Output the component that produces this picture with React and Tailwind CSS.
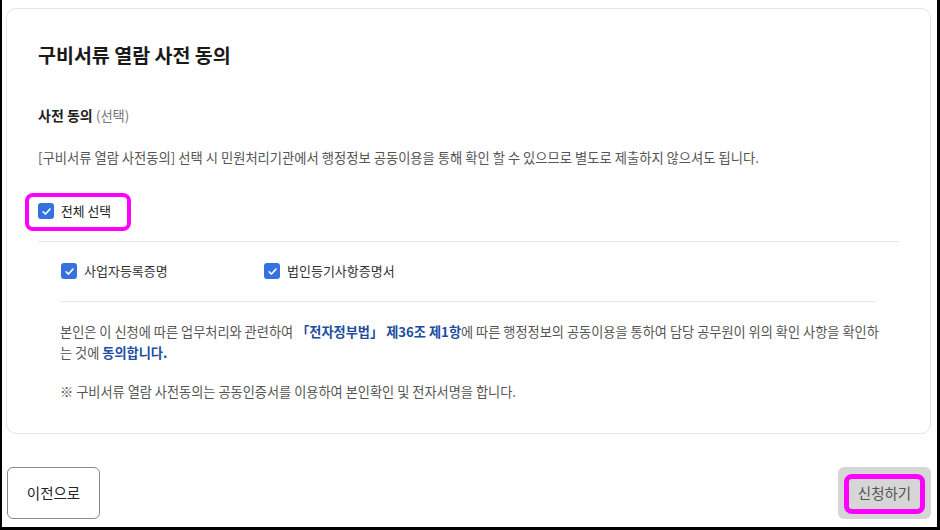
import React from 'react';

const Check = ({ size = 16 }) => (
  <span
    className="flex shrink-0 items-center justify-center rounded-[3px] bg-[#3572e0]"
    style={{ width: size, height: size }}
  >
    <svg width="11" height="11" viewBox="0 0 12 12" fill="none">
      <polyline points="2.3,6.3 4.9,8.8 9.8,3.4" stroke="#fff" strokeWidth="1.7" strokeLinecap="round" strokeLinejoin="round" />
    </svg>
  </span>
);

export default function App() {
  return (
    <div className="relative h-[530px] w-[940px] overflow-hidden border-b-[3px] border-l-2 border-r-[3px] border-black bg-white pl-1 pr-[6px] pt-2 font-['Noto_Sans_CJK_KR','Noto_Sans',sans-serif] text-[#222]">
      {/* 카드 */}
      <section className="h-[426px] rounded-[10px] border border-[#e4e4e4] px-[31px] pt-[32px]">
        <h1 className="text-[19.5px] font-bold leading-[28px] text-[#1a1a1a]">구비서류 열람 사전 동의</h1>

        <h2 className="mt-[35px] text-[14px] font-bold leading-[22px] text-[#222]">
          사전 동의 <span className="text-[13.3px] font-normal text-[#777]">(선택)</span>
        </h2>

        <p className="mt-[21px] text-[13.3px] leading-[20px] text-[#555]">
          [구비서류 열람 사전동의] 선택 시 민원처리기관에서 행정정보 공동이용을 통해 확인 할 수 있으므로 별도로 제출하지 않으셔도 됩니다.
        </p>

        <div className="relative mt-[33px] flex h-5 items-center gap-[7px]">
          <Check />
          <span className="text-[12.8px] text-[#222]">전체 선택</span>
          <span className="pointer-events-none absolute left-[-13px] top-[-8px] h-[38px] w-[106px] rounded-[8px] border-4 border-[#ff00ff]" />
        </div>

        <hr className="mt-[20px] border-t border-[#e6e6e6]" />

        <div className="mt-[19px] flex h-5 items-center pl-[23px] text-[13px] text-[#333]">
          <label className="flex w-[203px] items-center gap-[7px]">
            <Check />
            사업자등록증명
          </label>
          <label className="flex items-center gap-[7px]">
            <Check />
            법인등기사항증명서
          </label>
        </div>

        <hr className="ml-[22px] mr-[23px] mt-[20px] border-t border-[#e6e6e6]" />

        <div className="pl-[22px] pr-[10px] text-[13.2px] leading-[21px] text-[#555]">
          <p className="mt-[19px] whitespace-nowrap">
            본인은 이 신청에 따른 업무처리와 관련하여{' '}
            <b className="text-[#1d4d9f]">「전자정부법」 제36조 제1항</b>에 따른 행정정보의 공동이용을 통하여 담당 공무원이 위의 확인 사항을 확인하
            <br />는 것에 <b className="text-[#1d4d9f]">동의합니다.</b>
          </p>
          <p className="mt-[18px]">※ 구비서류 열람 사전동의는 공동인증서를 이용하여 본인확인 및 전자서명을 합니다.</p>
        </div>
      </section>

      {/* 하단 버튼 */}
      <div className="mt-[33px] flex items-center justify-between pl-[1px]">
        <button className="h-[52px] w-[93px] rounded-[6px] border border-[#8a8a8a] bg-white text-[14.5px] text-[#222]">
          이전으로
        </button>
        <button className="relative h-[52px] w-[93px] rounded-[6px] bg-[#d6d6d6] text-[14.5px] text-[#555]">
          신청하기
          <span className="pointer-events-none absolute left-[6px] top-[7px] h-[40px] w-[81px] rounded-[8px] border-[5px] border-[#ff00ff]" />
        </button>
      </div>
    </div>
  );
}
